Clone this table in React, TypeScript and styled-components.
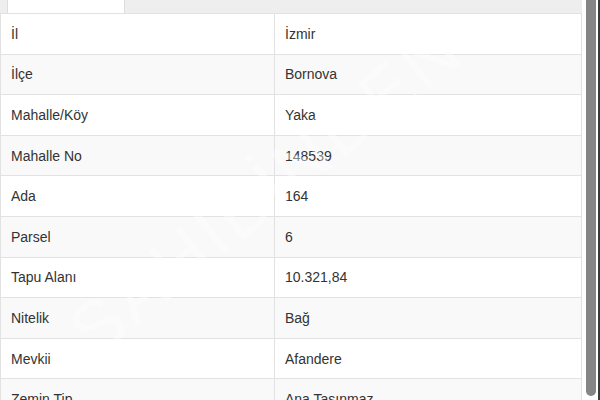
import React from "react";
import styled, { createGlobalStyle } from "styled-components";

const GlobalStyle = createGlobalStyle`
  html, body {
    margin: 0;
    padding: 0;
    background: #fff;
  }
  body {
    font-family: "Liberation Sans", Arial, sans-serif;
    font-size: 14px;
    color: #333;
  }
`;

const Frame = styled.div`
  width: 600px;
  height: 400px;
  overflow: hidden;
  display: flex;
  flex-direction: row;
  background: #fff;
`;

const Content = styled.div`
  width: 582px;
  display: flex;
  flex-direction: column;
  position: relative;
  overflow: hidden;
`;

const TabBar = styled.div`
  height: 13px;
  flex-shrink: 0;
  background: #eeeeee;
  border-bottom: 1px solid #dddddd;
  display: flex;
  padding-left: 7px;
`;

const Tab = styled.div<{ $active?: boolean }>`
  width: 116px;
  height: 14px;
  background: ${(p) => (p.$active ? "#fff" : "transparent")};
  border-left: 1px solid #dddddd;
  border-right: 1px solid #dddddd;
`;

const Table = styled.table`
  width: 582px;
  border-collapse: collapse;
  table-layout: fixed;
  margin-top: -1px;
`;

const Row = styled.tr`
  &:nth-of-type(even) {
    background: #f9f9f9;
  }
`;

const Cell = styled.td<{ $label?: boolean }>`
  width: ${(p) => (p.$label ? "253px" : "auto")};
  padding: 9.8px 10px 9.8px 10px;
  line-height: 20px;
  border: 1px solid #e2e2e2;
  vertical-align: top;
  white-space: nowrap;
`;

const Watermark = styled.div`
  position: absolute;
  left: 105px;
  top: 290px;
  font-family: "Liberation Sans", Arial, sans-serif;
  font-weight: 400;
  font-size: 72px;
  letter-spacing: 4px;
  color: rgba(255, 255, 255, 0.4);
  transform: rotate(-39deg);
  transform-origin: 0 100%;
  pointer-events: none;
  white-space: nowrap;
`;

const ScrollTrack = styled.div`
  width: 18px;
  height: 400px;
  display: flex;
  flex-direction: row;
  padding-left: 4px;
  box-sizing: border-box;
  background: #fff;
`;

const ScrollThumb = styled.div`
  width: 10px;
  height: 396px;
  background: #858585;
  border-radius: 0 0 5px 5px;
`;

const ScrollEdge = styled.div`
  width: 2px;
  margin-left: 2px;
  height: 400px;
  background: #3a3a3a;
`;

const rows: [string, string][] = [
  ["İl", "İzmir"],
  ["İlçe", "Bornova"],
  ["Mahalle/Köy", "Yaka"],
  ["Mahalle No", "148539"],
  ["Ada", "164"],
  ["Parsel", "6"],
  ["Tapu Alanı", "10.321,84"],
  ["Nitelik", "Bağ"],
  ["Mevkii", "Afandere"],
  ["Zemin Tip", "Ana Taşınmaz"],
];

export default function App() {
  return (
    <>
      <GlobalStyle />
      <Frame>
        <Content>
          <TabBar>
            <Tab $active />
          </TabBar>
          <Table>
            <tbody>
              {rows.map(([label, value]) => (
                <Row key={label}>
                  <Cell $label>{label}</Cell>
                  <Cell>{value}</Cell>
                </Row>
              ))}
            </tbody>
          </Table>
          <Watermark>SAHİBİNDEN</Watermark>
        </Content>
        <ScrollTrack>
          <ScrollThumb />
          <ScrollEdge />
        </ScrollTrack>
      </Frame>
    </>
  );
}
